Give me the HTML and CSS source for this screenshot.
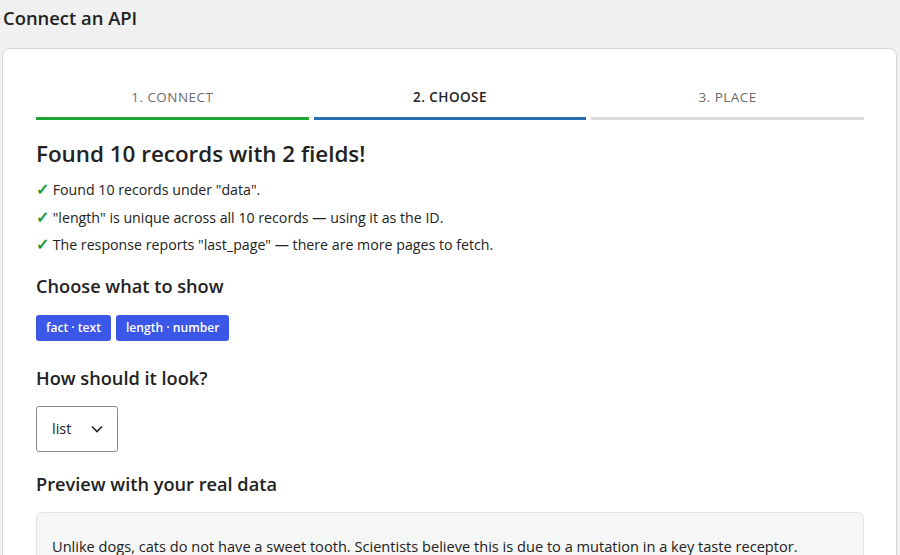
FILE: index.html
```html
<!DOCTYPE html>
<html lang="en">
<head>
  <meta charset="UTF-8">
  <meta name="viewport" content="width=device-width, initial-scale=1.0">
  <title>Connect an API</title>
  <link rel="stylesheet" href="styles.css">
</head>
<body>
<h1 class="page-title">Connect an API</h1>

<div class="wizard">
  <!-- Steps -->
  <div class="steps">
    <div class="step done">1. Connect</div>
    <div class="step active">2. Choose</div>
    <div class="step">3. Place</div>
  </div>

  <h2 class="result-title">Found 10 records with 2 fields!</h2>
  <ul class="checks">
    <li><span class="tick">✓</span> Found 10 records under "data".</li>
    <li><span class="tick">✓</span> "length" is unique across all 10 records — using it as the ID.</li>
    <li><span class="tick">✓</span> The response reports "last_page" — there are more pages to fetch.</li>
  </ul>

  <h3 class="section-title">Choose what to show</h3>
  <div class="fields">
    <button class="field-chip">fact · text</button>
    <button class="field-chip">length · number</button>
  </div>

  <h3 class="section-title">How should it look?</h3>
  <div class="select-box">
    <span>list</span>
    <svg width="14" height="14" viewBox="0 0 14 14"><polyline points="2,4.5 7,9.5 12,4.5" fill="none" stroke="#222" stroke-width="1.6"/></svg>
  </div>

  <h3 class="section-title">Preview with your real data</h3>
  <div class="preview">
    <p>Unlike dogs, cats do not have a sweet tooth. Scientists believe this is due to a mutation in a key taste receptor.</p>
  </div>
</div>
</body>
</html>
```

FILE: styles.css
```css
* {
  margin: 0;
  padding: 0;
  box-sizing: border-box;
}

body {
  font-family: 'Open Sans', 'Noto Sans', sans-serif;
  background-color: #f0f0f0;
  color: #222;
  padding: 0 3px 0 2px;
  height: 555px;
  overflow: hidden;
}

.page-title {
  font-size: 18.4px;
  font-weight: 600;
  line-height: 24px;
  padding: 6px 0 0 1px;
  margin-bottom: 18px;
}

/* Card */
.wizard {
  background-color: #fff;
  border: 1px solid #d6d6d6;
  border-radius: 8px;
  padding: 38px 32px 40px 33px;
  min-height: 600px;
}

/* Steps */
.steps {
  display: grid;
  grid-template-columns: repeat(3, 1fr);
  gap: 5px;
}

.step {
  text-align: center;
  font-size: 13.5px;
  line-height: 20px;
  letter-spacing: 0.45px;
  text-transform: uppercase;
  color: #6b6b6b;
  padding-bottom: 10px;
  border-bottom: 3px solid #dcdcdc;
}

.step.done {
  border-bottom-color: #1fa533;
}

.step.active {
  color: #222;
  font-weight: 600;
  border-bottom-color: #2a6cb0;
}

.result-title {
  font-size: 22.4px;
  font-weight: 600;
  line-height: 30px;
  margin-top: 19px;
}

.checks {
  list-style: none;
  margin-top: 7px;
}

.checks li {
  font-size: 14.2px;
  line-height: 20px;
  height: 28px;
  padding: 4px 0;
  margin-bottom: -0.5px;
}

.tick {
  color: #1a9c3c;
  font-weight: 700;
  font-size: 15.5px;
  line-height: 1;
}

.section-title {
  font-size: 18.2px;
  font-weight: 600;
  line-height: 24px;
  margin-top: 15px;
}

.fields {
  display: flex;
  gap: 5px;
  margin-top: 17px;
}

.field-chip {
  font-family: inherit;
  font-size: 12.1px;
  font-weight: 600;
  color: #fff;
  background-color: #3a57e8;
  border: none;
  border-radius: 3px;
  height: 26px;
  padding: 0 10px;
}

.fields + .section-title {
  margin-top: 25px;
}

.select-box {
  display: flex;
  align-items: center;
  justify-content: space-between;
  width: 82px;
  height: 46px;
  margin-top: 16px;
  padding: 0 13px 0 15px;
  border: 1px solid #8a8a8a;
  border-radius: 3px;
  font-size: 14.5px;
}

.select-box + .section-title {
  margin-top: 20px;
}

.preview {
  margin-top: 16px;
  background-color: #f5f6f6;
  border: 1px solid #e2e2e2;
  border-radius: 6px;
  padding: 23px 15px;
}

.preview p {
  font-size: 14.6px;
  line-height: 20px;
}
```
